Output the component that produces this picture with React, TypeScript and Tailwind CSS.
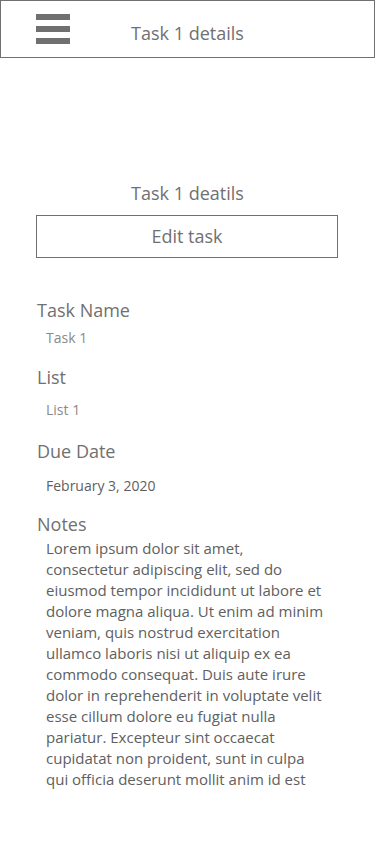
import React from 'react';

const notes =
  'Lorem ipsum dolor sit amet, consectetur adipiscing elit, sed do eiusmod tempor incididunt ut labore et dolore magna aliqua. Ut enim ad minim veniam, quis nostrud exercitation ullamco laboris nisi ut aliquip ex ea commodo consequat. Duis aute irure dolor in reprehenderit in voluptate velit esse cillum dolore eu fugiat nulla pariatur. Excepteur sint occaecat cupidatat non proident, sunt in culpa qui officia deserunt mollit anim id est';

const Field = ({ label, value, className }: { label: string; value: string; className: string }) => (
  <div>
    <p className="text-[18px] leading-[24px] text-[#707070]">{label}</p>
    <p className={`pl-[9px] text-[14px] leading-[20px] ${className}`}>{value}</p>
  </div>
);

export default function App() {
  return (
    <div className="min-h-[858px] w-[375px] bg-white text-[#707070]" style={{ fontFamily: '"Open Sans", "Noto Sans", sans-serif' }}>
      <header className="relative flex h-[58px] items-center justify-center border border-[#707070]">
        <div className="absolute left-[35px] top-[13px] flex flex-col gap-[6px]">
          <span className="block h-[6px] w-[34px] bg-[#707070]" />
          <span className="block h-[6px] w-[34px] bg-[#707070]" />
          <span className="block h-[6px] w-[34px] bg-[#707070]" />
        </div>
        <h1 className="mt-[7px] text-[18px] leading-[24px]">Task 1 details</h1>
      </header>

      <div className="px-[36px] pt-[123px]">
        <h2 className="text-center text-[18px] leading-[24px]">Task 1 deatils</h2>
        <button className="mt-[10px] flex h-[43px] w-[302px] items-center justify-center border border-[#707070] text-[18px]">
          Edit task
        </button>

        <div className="mt-[40px] flex flex-col">
          <div className="pl-px">
            <Field label="Task Name" value="Task 1" className="mt-[6px] text-[#8a8a8a]" />
          </div>
          <div className="mt-[17px] pl-px">
            <Field label="List" value="List 1" className="mt-[11px] text-[#8a8a8a]" />
          </div>
          <div className="mt-[19px] pl-px">
            <Field label="Due Date" value="February 3, 2020" className="mt-[13px] text-[#606060]" />
          </div>
          <div className="mt-[16px] pl-px">
            <p className="text-[18px] leading-[24px] text-[#707070]">Notes</p>
            <p className="mt-[2px] w-[290px] pl-[9px] text-[15px] leading-[21px] text-[#606060]">{notes}</p>
          </div>
        </div>
      </div>
    </div>
  );
}
